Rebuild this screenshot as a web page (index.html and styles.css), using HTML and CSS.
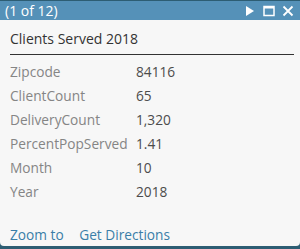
FILE: index.html
```html
<!DOCTYPE html>
<html lang="en">
<head>
  <meta charset="UTF-8" />
  <title>Popup</title>
  <link rel="stylesheet" href="styles.css">
</head>
<body>
  <div class="popup">
    <header class="popup-header">
      <span class="count">(1 of 12)</span>
      <div class="controls">
        <svg width="12" height="12" viewBox="0 0 12 12"><path d="M2 1 L10 6 L2 11 Z" fill="#fff"/></svg>
        <svg width="12" height="12" viewBox="0 0 12 12"><rect x="1" y="1.5" width="10" height="9" fill="none" stroke="#fff" stroke-width="1.5"/><rect x="1" y="1" width="10" height="2.5" fill="#fff"/></svg>
        <svg width="12" height="12" viewBox="0 0 12 12"><path d="M1.5 1.5 L10.5 10.5 M10.5 1.5 L1.5 10.5" stroke="#fff" stroke-width="1.8"/></svg>
      </div>
    </header>

    <section class="popup-body">
      <h2 class="title">Clients Served 2018</h2>
      <table class="attrs">
        <tr><td class="key">Zipcode</td><td class="val">84116</td></tr>
        <tr><td class="key">ClientCount</td><td class="val">65</td></tr>
        <tr><td class="key">DeliveryCount</td><td class="val">1,320</td></tr>
        <tr><td class="key">PercentPopServed</td><td class="val">1.41</td></tr>
        <tr><td class="key">Month</td><td class="val">10</td></tr>
        <tr><td class="key">Year</td><td class="val">2018</td></tr>
      </table>
    </section>

    <footer class="actions">
      <a href="#">Zoom to</a>
      <a href="#">Get Directions</a>
    </footer>
  </div>
</body>
</html>
```

FILE: styles.css
```css
body {
  margin: 0;
  background: #2d5d73;
  font-family: "Open Sans", Arial, sans-serif;
}

.popup {
  margin-top: 1px;
  width: 300px;
  height: 245px;
  background: #f7f7f7;
  border-radius: 0 0 4px 4px;
  display: flex;
  flex-direction: column;
}

.popup-header {
  height: 19px;
  background: #5591b8;
  color: #fff;
  display: flex;
  align-items: center;
  justify-content: space-between;
  padding: 0 4px 0 5px;
}

.count {
  font-size: 14px;
}

.controls {
  display: flex;
  gap: 7px;
  padding-right: 2px;
}

.popup-body {
  flex: 1;
  padding: 0 6px 0 10px;
}

.title {
  font-size: 14px;
  font-weight: 400;
  color: #333;
  margin: 9px 0 0;
  padding-bottom: 6px;
  border-bottom: 1px solid #333;
}

.attrs {
  border-collapse: collapse;
  margin-top: 4px;
  font-size: 13.7px;
}

.attrs td {
  padding: 0;
  height: 24px;
}

.key {
  color: #858585;
  width: 126px;
}

.val {
  color: #4c4c4c;
}

.actions {
  padding: 0 10px 2px;
  font-size: 13.7px;
}

.actions a {
  color: #3a7ea8;
  text-decoration: none;
  margin-right: 12px;
}
```
